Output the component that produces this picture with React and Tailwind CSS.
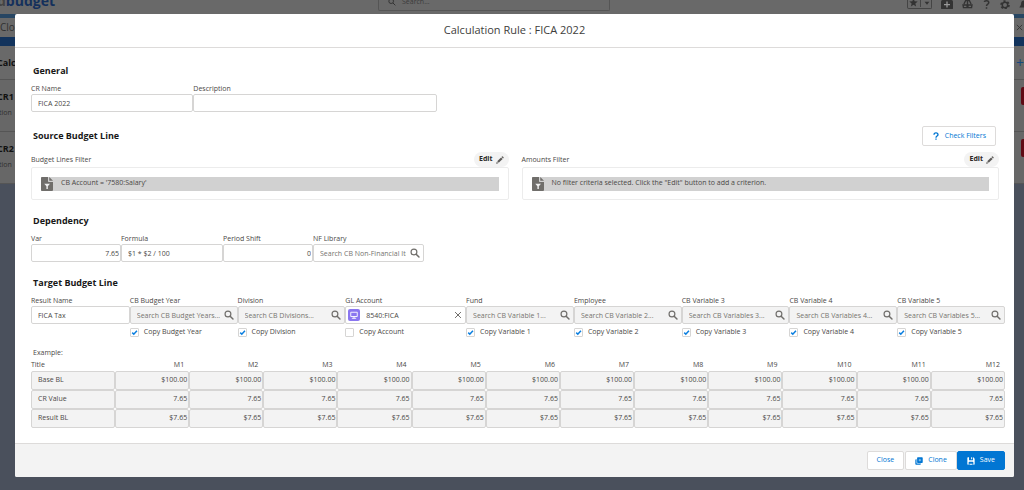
import React, { useId, useState } from 'react';

// Small icon set used across the dialog
const SearchIcon = () => (
  <svg viewBox="0 0 24 24" className="h-[10px] w-[10px] shrink-0 text-[#706e6b]" fill="none" stroke="currentColor">
    <circle cx="9.5" cy="9.5" r="7" strokeWidth="2.8" />
    <path d="M14.8 14.8 L21.5 21.5" strokeWidth="3.6" strokeLinecap="round" />
  </svg>
);

const PencilIcon = () => (
  <svg viewBox="0 0 24 24" className="h-2 w-2 text-[#5c5a58]" fill="currentColor">
    <path d="M15.2 4.2 19.8 8.8 8.2 20.4 3.6 15.8z" />
    <path d="M16.4 3 18 1.4a1.8 1.8 0 0 1 2.5 0l2.1 2.1a1.8 1.8 0 0 1 0 2.5L21 7.6z" />
    <path d="M2.6 17.2 6.8 21.4 1.2 23a.5.5 0 0 1-.6-.6z" />
  </svg>
);

const FilterDocIcon = () => (
  <svg viewBox="0 0 24 28" className="h-[14px] w-3 shrink-0" fill="#706e6b">
    <path d="M2 0H14v8.500A1.500 1.500 0 0 0 15.500 10H24v16a2 2 0 0 1-2 2H2a2 2 0 0 1-2-2V2a2 2 0 0 1 2-2z" />
    <path d="M16.500 0 24 7.500H16.500z" />
    <path d="M6.500 13.500h11.500l-4.300 5v5.300h-2.900v-5.300z" fill="#eee" />
  </svg>
);

const MonitorIcon = () => (
  <svg viewBox="0 0 24 24" className="h-3 w-3 shrink-0">
    <rect width="24" height="24" rx="4" fill="#8a76f0" />
    <path d="M5.500 6.500h13v8.500h-13z" fill="none" stroke="#fff" strokeWidth="1.800" strokeLinejoin="round" />
    <path d="M12 15v3.500M8.500 18.500h7" stroke="#fff" strokeWidth="1.800" strokeLinecap="round" />
  </svg>
);

const CrossIcon = () => (
  <svg viewBox="0 0 24 24" className="h-2 w-2 shrink-0" fill="none" stroke="#706e6b" strokeWidth="3" strokeLinecap="round">
    <path d="M4 4 20 20M20 4 4 20" />
  </svg>
);

const CloneIcon = () => (
  <svg viewBox="0 0 24 24" className="h-2 w-2" fill="currentColor">
    <path d="M8.500 1H21a2.200 2.200 0 0 1 2.200 2.200V15.500a2.200 2.200 0 0 1-2.200 2.200H8.500a2.200 2.200 0 0 1-2.200-2.200V3.200A2.200 2.200 0 0 1 8.500 1z" />
    <path d="M1 8.700a2.200 2.200 0 0 1 2.200-2.200h1.500v11.200a2 2 0 0 0 2 2h10.800v1.200a2.200 2.200 0 0 1-2.200 2.200H3.200A2.200 2.200 0 0 1 1 20.900z" />
    <path d="M14.700 5.500v7.700M10.900 9.300h7.700" stroke="#fff" strokeWidth="1.400" />
  </svg>
);

const SaveIcon = () => (
  <svg viewBox="0 0 24 24" className="h-2 w-2" fill="currentColor">
    <path d="M3 1h3v7.500A1.500 1.500 0 0 0 7.500 10h9A1.500 1.500 0 0 0 18 8.500V1h1l4 4v16a2 2 0 0 1-2 2h-2v-7a2 2 0 0 0-2-2H7a2 2 0 0 0-2 2v7H3a2 2 0 0 1-2-2V3a2 2 0 0 1 2-2z" />
    <path d="M12.500 1h3v5.500h-3zM7.500 20.500h9V23h-9z" />
  </svg>
);

const QuestionIcon = () => (
  <svg viewBox="0 0 24 24" className="h-2 w-2" fill="none" stroke="currentColor" strokeWidth="4">
    <path d="M6 8.500C6 4.500 8.500 2.500 12 2.500s6 2.200 6 5.500c0 4.200-6 4-6 9" />
    <path d="M12 19.500v4" />
  </svg>
);

// Text field with its label above
const Field = ({ label, value, right }) => {
  const id = useId();
  return (
    <div className="min-w-0">
      <label htmlFor={id} className="block h-[10px] leading-[10px] whitespace-nowrap">{label}</label>
      <input
        id={id}
        defaultValue={value}
        className={`block h-[18px] w-full rounded-[2px] border border-[#d6d5d4] bg-white ${
          right ? 'pr-px pl-[6px] text-right' : 'px-[6px]'
        }`}
      />
    </div>
  );
};

// Lookup field, with an optional "copy" checkbox below
const Lookup = ({ label, placeholder, value, copy, enabled }) => {
  const id = useId();
  const [checked, setChecked] = useState(!value);
  return (
    <div className="min-w-0">
      <label htmlFor={id} className="block h-[10px] leading-[10px] whitespace-nowrap">{label}</label>
      <div
        className={`flex h-[18px] items-center rounded-[2px] border border-[#d6d5d4] pr-[3px] ${
          value ? 'bg-white pl-[2px]' : enabled ? 'bg-white pl-[6px]' : 'bg-[#f3f3f3] pl-[6px]'
        }`}
      >
        {value && <MonitorIcon />}
        <input
          id={id}
          defaultValue={value}
          placeholder={placeholder}
          disabled={!enabled && !value}
          className={`mr-1 h-full min-w-0 flex-1 bg-transparent placeholder:text-[#76736f] ${value ? 'pl-[6px]' : ''}`}
        />
        {value ? <CrossIcon /> : <SearchIcon />}
      </div>
      {copy && (
        <label className="mt-[2px] flex h-3 items-center gap-[5px] whitespace-nowrap">
          <span className="grid h-[9px] w-[9px] place-items-center">
            <input
              type="checkbox"
              checked={checked}
              onChange={(e) => setChecked(e.target.checked)}
              className="col-start-1 row-start-1 h-[9px] w-[9px] appearance-none rounded-[1px] border border-[#d6d5d4] bg-white"
            />
            {checked && (
              <svg viewBox="0 0 10 10" className="pointer-events-none col-start-1 row-start-1 h-[7px] w-[7px]" fill="none" stroke="#0b7fe0" strokeWidth="2.2">
                <path d="M1.800 5.200 4 7.400 8.500 2.500" />
              </svg>
            )}
          </span>
          {copy}
        </label>
      )}
    </div>
  );
};

const SectionTitle = ({ children }) => (
  <h3 className="px-[2px] text-[9px] leading-[12px] font-bold text-[#181818]">{children}</h3>
);

const FilterBox = ({ label, text }) => (
  <section className="min-w-0 flex-1">
    <div className="flex h-[15px] items-center justify-between">
      <span className="leading-[10px]">{label}</span>
      <button className="flex h-[15px] items-center gap-[3px] rounded-full bg-[#f3f3f3] px-[5px] font-bold text-[#2b2826]">
        Edit <PencilIcon />
      </button>
    </div>
    <div className="rounded-[2px] border border-[#ececec] px-[9px] py-[8px]">
      <div className="flex h-[15px] items-center">
        <div className="flex h-[14px] flex-1 items-center gap-2 bg-[#d1d1d1]">
          <FilterDocIcon />
          <span>{text}</span>
        </div>
      </div>
    </div>
  </section>
);

const months = ['M1', 'M2', 'M3', 'M4', 'M5', 'M6', 'M7', 'M8', 'M9', 'M10', 'M11', 'M12'];
const exampleRows = [
  { title: 'Base BL', value: '$100.00' },
  { title: 'CR Value', value: '7.65' },
  { title: 'Result BL', value: '$7.65' },
];

// Dimmed application page behind the dialog
const PageBehind = () => (
  <div className="min-h-screen bg-[#4a505c] text-[7px] text-[#303030]">
    <header className="flex h-[14px] items-start justify-between overflow-hidden bg-[#696969]">
      <div className="-mt-[7px] -ml-[3px] w-[57px] text-[14px] leading-[16px] font-bold text-[#444]">
        d<span className="text-[#14305c]">budget</span>
      </div>
      <div className="ml-[324px] flex h-[11px] w-[232px] items-center gap-[6px] rounded-b-[2px] border border-t-0 border-[#555] px-[9px] pb-[6px] text-[#3c3c3c]">
        <svg viewBox="0 0 24 24" className="h-2 w-2" fill="none" stroke="#333" strokeWidth="3">
          <circle cx="9.500" cy="9.500" r="7" />
          <path d="M15 15 22 22" />
        </svg>
        Search...
      </div>
      <div className="ml-auto flex h-[9px] w-[117px] shrink-0 items-center gap-[9px] overflow-hidden text-[#333]">
        <div className="flex h-[9px] w-[25px] shrink-0 items-center justify-around rounded-b-[2px] border border-t-0 border-[#444] pb-[3px]">
          <svg viewBox="0 0 24 24" className="h-[9px] w-[9px]" fill="currentColor">
            <path d="M12 1l3.100 7.600 8.200.6-6.300 5.300 2 8-7-4.400-7 4.400 2-8L.7 9.200l8.200-.6z" />
          </svg>
          <span className="h-[9px] w-px bg-[#444]" />
          <svg viewBox="0 0 10 10" className="h-[6px] w-[6px]" fill="currentColor"><path d="M1 3h8L5 8z" /></svg>
        </div>
        <svg viewBox="0 0 24 20" className="h-[10px] w-3 shrink-0" fill="currentColor">
          <rect width="24" height="19" rx="3" />
          <path d="M12 3v12M6 9h12" stroke="#999" strokeWidth="2.500" />
        </svg>
        <svg viewBox="0 0 24 20" className="h-[9px] w-[11px] shrink-0" fill="none" stroke="currentColor" strokeWidth="3">
          <path d="M4 9 8 1h8l4 8M2 11h9v6H3zM13 11h9l-1 6h-8zM12 1v14" />
        </svg>
        <svg viewBox="0 0 24 24" className="h-[9px] w-[9px] shrink-0" fill="none" stroke="currentColor" strokeWidth="4">
          <path d="M6 5c1-4 12-4 12 2 0 4-6 4-6 9M12 19v4" />
        </svg>
        <svg viewBox="0 0 24 24" className="h-[10px] w-[10px] shrink-0" fill="none" stroke="currentColor">
          <circle cx="12" cy="12" r="6.500" strokeWidth="3.500" />
          <circle cx="12" cy="12" r="9.500" strokeWidth="4" strokeDasharray="5 4.950" />
        </svg>
        <svg viewBox="0 0 24 24" className="h-[10px] w-[10px] shrink-0" fill="currentColor">
          <path d="M12 1c5 0 7 4 7 8 0 5 4 7 4 9H1c0-2 4-4 4-9 0-4 2-8 7-8z" />
        </svg>
      </div>
    </header>
    <nav className="flex h-[23px] items-center justify-between border-t-4 border-[#274663] bg-[#696969] text-[10px]">
      <span>Clo</span>
      <svg viewBox="0 0 24 24" className="mr-px h-[7px] w-[7px]" fill="none" stroke="#333" strokeWidth="3"><path d="M3 3 21 21M21 3 3 21" /></svg>
    </nav>
    <div className="h-[9px] bg-[#12335c]" />
    <div className="flex h-[34px] items-center justify-between border-b border-[#555] bg-[#696969] text-[9px] font-bold text-[#111]">
      <span className="-ml-[3px]">Calc</span>
      <span className="text-[14px] font-normal text-[#174a7e]">+</span>
    </div>
    {['CR1', 'CR2'].map((name) => (
      <div key={name} className="flex h-[52px] items-start justify-between border-b border-[#555] bg-[#676767]">
        <div className="-ml-[3px] pt-[10px]">
          <p className="text-[9px] leading-[14px] font-bold text-[#111]">{name}</p>
          <p className="pt-[3px] pl-[2px] leading-[12px]">tion</p>
        </div>
        <span className="mt-[7px] h-[18px] w-[3px] rounded-l-[2px] bg-[#600a14]" />
      </div>
    ))}
  </div>
);

const App = () => {
  return (
    <div className="relative font-['Open_Sans','Noto_Sans',sans-serif]">
      <PageBehind />

      {/* Dialog */}
      <div className="absolute inset-x-0 top-0 pt-[14px] pr-[10px] pl-[15px]">
        <div role="dialog" aria-labelledby="dialog-title" className="overflow-hidden rounded-[2px] bg-white text-[7px] text-[#4a4846]">
          <header className="flex h-[34px] items-center justify-center border-b border-[#dddbda]">
            <h2 id="dialog-title" className="text-[11px] text-[#3e3e3c]">Calculation Rule : FICA 2022</h2>
          </header>

          <div className="pt-[17px] pr-[9px] pb-[15px] pl-4">
            <SectionTitle>General</SectionTitle>
            <div className="mt-[7px] grid w-5/12 grid-cols-[2fr_3fr]">
              <Field label="CR Name" value="FICA 2022" />
              <Field label="Description" value="" />
            </div>

            <div className="mt-[14px] flex items-center justify-between pr-[9px]">
              <SectionTitle>Source Budget Line</SectionTitle>
              <button className="flex h-[20px] items-center gap-[5px] rounded-[2px] border border-[#dddbda] bg-white px-[9px] text-[#0176d3]">
                <QuestionIcon /> Check Filters
              </button>
            </div>
            <div className="mt-[6px] flex gap-[13px] pr-[6px]">
              <FilterBox label="Budget Lines Filter" text="CB Account = '7580:Salary'" />
              <FilterBox label="Amounts Filter" text={'No filter criteria selected. Click the "Edit" button to add a criterion.'} />
            </div>

            <div className="mt-[15px]">
              <SectionTitle>Dependency</SectionTitle>
            </div>
            <div className="mt-[7px] grid grid-cols-[90fr_102fr_90fr_111fr_581fr]">
              <Field label="Var" value="7.65" right />
              <Field label="Formula" value="$1 * $2 / 100" />
              <Field label="Period Shift" value="0" right />
              <Lookup label="NF Library" placeholder="Search CB Non-Financial Items..." enabled />
            </div>

            <div className="mt-[15px]">
              <SectionTitle>Target Budget Line</SectionTitle>
            </div>
            <div className="mt-[7px] grid grid-cols-[99fr_108fr_108fr_121fr_108fr_108fr_108fr_108fr_108fr]">
              <Field label="Result Name" value="FICA Tax" />
              <Lookup label="CB Budget Year" placeholder="Search CB Budget Years..." copy="Copy Budget Year" />
              <Lookup label="Division" placeholder="Search CB Divisions..." copy="Copy Division" />
              <Lookup label="GL Account" value="8540:FICA" copy="Copy Account" />
              <Lookup label="Fund" placeholder="Search CB Variable 1..." copy="Copy Variable 1" />
              <Lookup label="Employee" placeholder="Search CB Variable 2..." copy="Copy Variable 2" />
              <Lookup label="CB Variable 3" placeholder="Search CB Variables 3..." copy="Copy Variable 3" />
              <Lookup label="CB Variable 4" placeholder="Search CB Variables 4..." copy="Copy Variable 4" />
              <Lookup label="CB Variable 5" placeholder="Search CB Variables 5..." copy="Copy Variable 5" />
            </div>

            <p className="mt-[9px] px-[2px] leading-[12px]">Example:</p>
            <table className="w-full table-fixed border-separate border-spacing-0">
              <thead>
                <tr className="h-3">
                  <th className="w-[84px] text-left leading-[12px] font-normal">Title</th>
                  {months.map((m) => (
                    <th key={m} className="pr-[5px] text-right leading-[12px] font-normal">{m}</th>
                  ))}
                </tr>
              </thead>
              <tbody>
                {exampleRows.map((row) => (
                  <tr key={row.title} className="h-[19px]">
                    <td className="rounded-[2px] border border-[#d6d5d4] bg-[#f3f3f3] px-[6px]">{row.title}</td>
                    {months.map((m) => (
                      <td key={m} className="rounded-[2px] border border-[#d6d5d4] bg-[#f3f3f3] pr-px text-right">{row.value}</td>
                    ))}
                  </tr>
                ))}
              </tbody>
            </table>
          </div>

          <footer className="flex h-[34px] items-center justify-end border-t border-[#dddbda] bg-[#f3f3f3] pr-[9px] text-[#0176d3]">
            <button className="mr-px h-[19px] rounded-[2px] border border-[#dddbda] bg-white px-[9px]">Close</button>
            <button className="flex h-[19px] items-center gap-[5px] rounded-[2px] border border-[#dddbda] bg-white px-[9px]">
              <CloneIcon /> Clone
            </button>
            <button className="flex h-[19px] items-center gap-[5px] rounded-[2px] border border-[#0176d3] bg-[#0176d3] px-[9px] text-white">
              <SaveIcon /> Save
            </button>
          </footer>
        </div>
      </div>
    </div>
  );
};

export default App;
